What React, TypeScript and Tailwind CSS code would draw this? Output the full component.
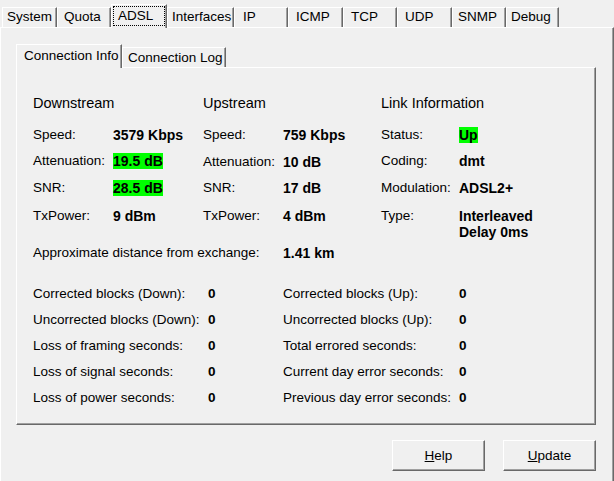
import React from "react";

interface Tab {
  name: string;
  width: number;
  pad: number;
}

const mainTabs: Tab[] = [
  { name: "System", width: 55, pad: 4 },
  { name: "Quota", width: 54, pad: 6 },
  { name: "ADSL", width: 56, pad: 6 },
  { name: "Interfaces", width: 67, pad: 4 },
  { name: "IP", width: 54, pad: 8 },
  { name: "ICMP", width: 55, pad: 7 },
  { name: "TCP", width: 54, pad: 7 },
  { name: "UDP", width: 55, pad: 7 },
  { name: "SNMP", width: 54, pad: 5 },
  { name: "Debug", width: 53, pad: 4 },
];

const raised =
  "border-l border-t border-white border-r border-r-[#696969] shadow-[inset_-1px_0_0_#a0a0a0]";

const Label: React.FC<{ w: number; children: React.ReactNode }> = ({ w, children }) => (
  <div className="shrink-0" style={{ width: w }}>
    {children}
  </div>
);

const Value: React.FC<{ children: React.ReactNode; green?: boolean }> = ({ children, green }) => (
  <div className="font-bold text-[14px]">
    {green ? <span className="bg-[#00ff00]">{children}</span> : children}
  </div>
);

const statsLeft: [string, string][] = [
  ["Corrected blocks (Down):", "0"],
  ["Uncorrected blocks (Down):", "0"],
  ["Loss of framing seconds:", "0"],
  ["Loss of signal seconds:", "0"],
  ["Loss of power seconds:", "0"],
];

const statsRight: [string, string][] = [
  ["Corrected blocks (Up):", "0"],
  ["Uncorrected blocks (Up):", "0"],
  ["Total errored seconds:", "0"],
  ["Current day error seconds:", "0"],
  ["Previous day error seconds:", "0"],
];

const App: React.FC = () => {
  return (
    <div className="flex h-[481px] w-[614px] flex-col overflow-hidden bg-[#f0f0f0] font-['Liberation_Sans',Arial,sans-serif] text-[13.5px] text-black">
      {/* main tab strip */}
      <div className="flex h-[27px] items-end pl-[2px]">
        {mainTabs.map((tab) => {
          const selected = tab.name === "ADSL";
          return selected ? (
            <div
              key={tab.name}
              className={`relative z-10 -mb-px h-[24px] bg-[#f0f0f0] ${raised}`}
              style={{ width: tab.width }}
            >
              <div className="mx-[1px] mt-[1px] h-[20px] border border-dotted border-black pl-[4px] leading-[18px]">
                {tab.name}
              </div>
            </div>
          ) : (
            <div
              key={tab.name}
              className={`h-[20px] leading-[18px] ${raised}`}
              style={{ width: tab.width, paddingLeft: tab.pad }}
            >
              {tab.name}
            </div>
          );
        })}
      </div>

      {/* outer panel */}
      <div className="flex-1 border-l border-t border-white border-r border-r-[#696969] pl-[15px] pt-[16px] shadow-[inset_-1px_0_0_#a0a0a0]">
        <div className="flex h-[23px] items-end">
          <div className={`relative z-10 -mb-px h-[24px] w-[106px] bg-[#f0f0f0] pl-[7px] pt-[2px] leading-[18px] ${raised}`}>
            Connection Info
          </div>
          <div className={`h-[20px] w-[104px] pl-[5px] pt-[1px] leading-[18px] ${raised}`}>
            Connection Log
          </div>
        </div>

        {/* inner panel */}
        <div className="h-[358px] w-[580px] border-l border-t border-white border-b border-r border-b-[#696969] border-r-[#696969] pl-[16px] pt-[26px] shadow-[inset_-1px_-1px_0_#a0a0a0]">
          <div className="flex h-[33px] text-[14.5px] leading-[18px]">
            <div className="w-[170px]">Downstream</div>
            <div className="w-[178px]">Upstream</div>
            <div>Link Information</div>
          </div>

          <div className="leading-[16px]">
            <div className="flex h-[26px]">
              <div className="flex w-[170px]">
                <Label w={80}>Speed:</Label>
                <Value>3579 Kbps</Value>
              </div>
              <div className="flex w-[178px]">
                <Label w={80}>Speed:</Label>
                <Value>759 Kbps</Value>
              </div>
              <div className="flex">
                <Label w={78}>Status:</Label>
                <Value green>Up</Value>
              </div>
            </div>
            <div className="flex h-[27px]">
              <div className="flex w-[170px]">
                <Label w={80}>Attenuation:</Label>
                <Value green>19.5 dB</Value>
              </div>
              <div className="flex w-[178px] pt-[1px]">
                <Label w={80}>Attenuation:</Label>
                <Value>10 dB</Value>
              </div>
              <div className="flex">
                <Label w={78}>Coding:</Label>
                <Value>dmt</Value>
              </div>
            </div>
            <div className="flex h-[28px]">
              <div className="flex w-[170px]">
                <Label w={80}>SNR:</Label>
                <Value green>28.5 dB</Value>
              </div>
              <div className="flex w-[178px]">
                <Label w={80}>SNR:</Label>
                <Value>17 dB</Value>
              </div>
              <div className="flex">
                <Label w={78}>Modulation:</Label>
                <Value>ADSL2+</Value>
              </div>
            </div>
            <div className="flex h-[37px]">
              <div className="flex w-[170px]">
                <Label w={80}>TxPower:</Label>
                <Value>9 dBm</Value>
              </div>
              <div className="flex w-[178px]">
                <Label w={80}>TxPower:</Label>
                <Value>4 dBm</Value>
              </div>
              <div className="flex">
                <Label w={78}>Type:</Label>
                <Value>
                  Interleaved
                  <br />
                  Delay 0ms
                </Value>
              </div>
            </div>
            <div className="flex h-[41px]">
              <Label w={250}>Approximate distance from exchange:</Label>
              <Value>1.41 km</Value>
            </div>

            <div className="flex">
              <div className="w-[250px]">
                {statsLeft.map(([label, value]) => (
                  <div key={label} className="flex h-[26px]">
                    <Label w={175}>{label}</Label>
                    <div className="font-bold">{value}</div>
                  </div>
                ))}
              </div>
              <div>
                {statsRight.map(([label, value]) => (
                  <div key={label} className="flex h-[26px]">
                    <Label w={176}>{label}</Label>
                    <div className="font-bold">{value}</div>
                  </div>
                ))}
              </div>
            </div>
          </div>
        </div>

        {/* buttons */}
        <div className="mt-[15px] flex w-[580px] justify-end gap-[18px]">
          <button className="h-[31px] w-[93px] border-l border-t border-white border-b border-r border-b-[#696969] border-r-[#696969] bg-[#f0f0f0] leading-[16px] shadow-[inset_-1px_-1px_0_#a0a0a0]">
            <u>H</u>elp
          </button>
          <button className="h-[31px] w-[93px] border-l border-t border-white border-b border-r border-b-[#696969] border-r-[#696969] bg-[#f0f0f0] leading-[16px] shadow-[inset_-1px_-1px_0_#a0a0a0]">
            <u>U</u>pdate
          </button>
        </div>
      </div>
    </div>
  );
};

export default App;
